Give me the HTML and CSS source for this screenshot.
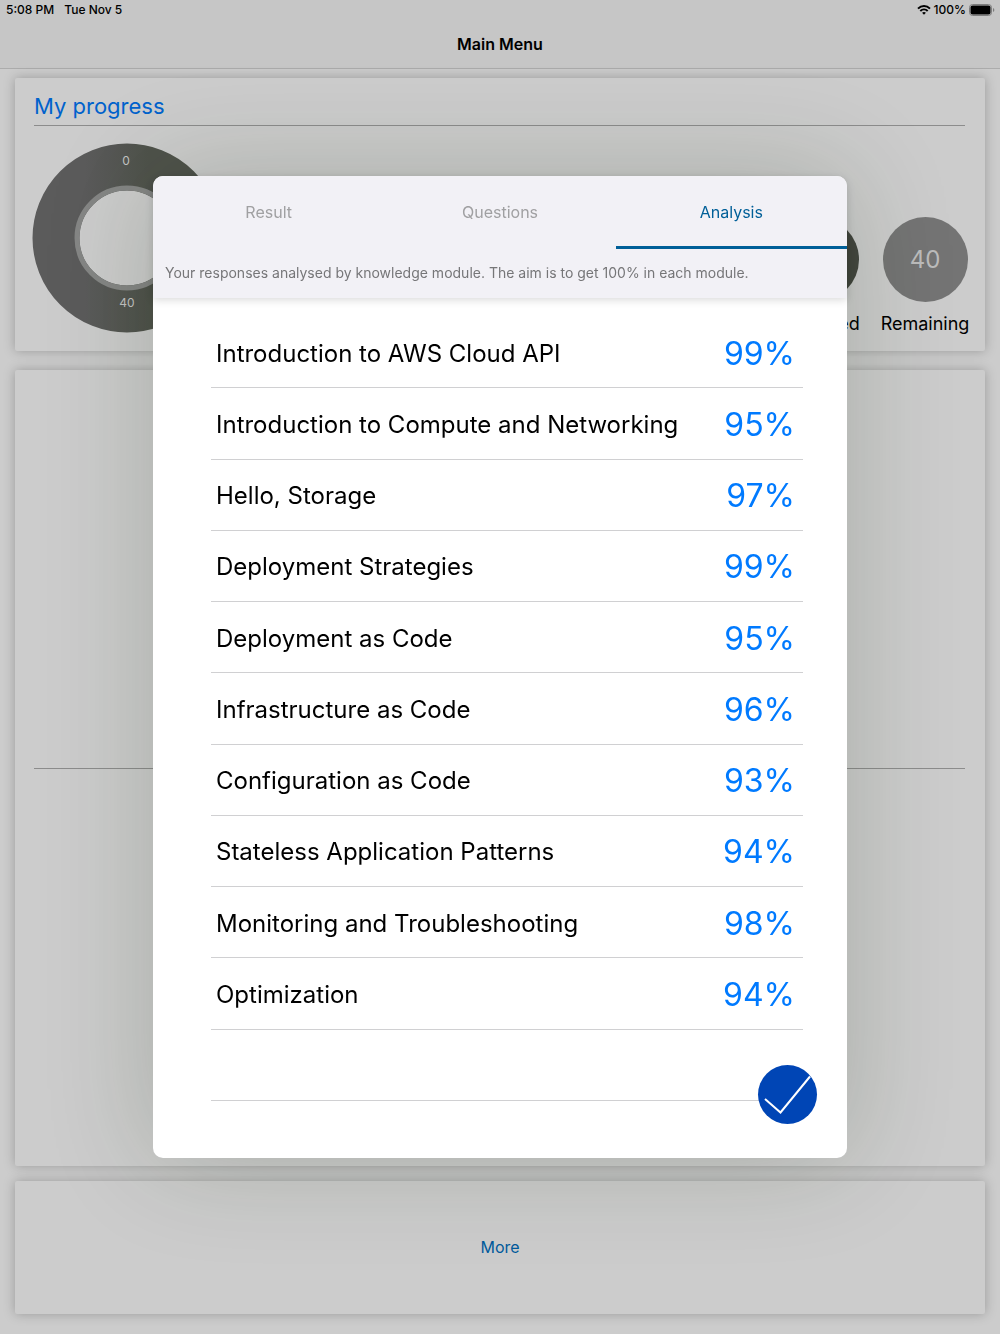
FILE: index.html
```html
<!DOCTYPE html>
<html lang="en">
<head>
  <meta charset="UTF-8" />
  <meta name="viewport" content="width=device-width, initial-scale=1.0"/>
  <title>Main Menu</title>
  <link rel="stylesheet" href="styles.css">
</head>
<body>
  <!-- Top bar -->
  <header class="topbar">
    <div class="status">
      <span>5:08 PM</span>
      <span>Tue Nov 5</span>
      <span class="status-right">
        <svg width="14" height="10" viewBox="0 0 14 10" fill="none" stroke="#000" stroke-width="2">
          <path d="M1 3.6 C4.4 0.2 9.6 0.2 13 3.6" />
          <path d="M3.3 6 C5.4 4 8.6 4 10.7 6" />
          <path d="M5.1 7.7 C6.2 6.8 7.8 6.8 8.9 7.7 L7 9.8 Z" fill="#000" stroke="none" />
        </svg>
        <span>100%</span>
        <svg width="26" height="12" viewBox="0 0 26 12">
          <rect x="0.5" y="0.5" width="22" height="11" rx="3" fill="none" stroke="#7d7d7d" />
          <rect x="1.5" y="1.5" width="20" height="9" rx="2" fill="#000" />
          <path d="M24 4 C25.8 4.6 25.8 7.4 24 8 Z" fill="#7d7d7d" />
        </svg>
      </span>
    </div>
    <h1 class="page-title">Main Menu</h1>
  </header>

  <main class="cards">
    <!-- My progress -->
    <section class="card progress">
      <h2 class="card-title">My progress</h2>
      <div class="progress-row">
        <svg class="donut" width="190" height="190" viewBox="0 0 190 190">
          <defs>
            <linearGradient id="ring" x1="0" x2="1" y1="0" y2="0">
              <stop offset="0.2" stop-color="#5b5b5b" />
              <stop offset="0.65" stop-color="#4f524b" />
            </linearGradient>
          </defs>
          <circle cx="95" cy="95" r="71" fill="none" stroke="url(#ring)" stroke-width="47" />
          <circle cx="95" cy="95" r="50" fill="none" stroke="#858685" stroke-width="5" />
          <text x="94" y="22">0</text>
          <text x="95" y="164">40</text>
        </svg>
        <div class="stats">
          <div class="stat">
            <div class="stat-circle dark"></div>
            <div>Attempted</div>
          </div>
          <div class="stat">
            <div class="stat-circle">40</div>
            <div>Remaining</div>
          </div>
        </div>
      </div>
    </section>

    <section class="card middle">
      <hr />
    </section>

    <section class="card more">
      <a href="#">More</a>
    </section>
  </main>

  <!-- Result dialog -->
  <div class="overlay">
    <div class="modal" role="dialog" aria-label="Analysis">
      <div class="modal-head">
        <div class="tabs">
          <button class="tab">Result</button>
          <button class="tab">Questions</button>
          <button class="tab active">Analysis</button>
        </div>
        <p class="hint">Your responses analysed by knowledge module. The aim is to get 100% in each module.</p>
      </div>

      <table class="modules">
        <tr><td>Introduction to AWS Cloud API</td><td class="score">99%</td></tr>
        <tr><td>Introduction to Compute and Networking</td><td class="score">95%</td></tr>
        <tr><td>Hello, Storage</td><td class="score">97%</td></tr>
        <tr><td>Deployment Strategies</td><td class="score">99%</td></tr>
        <tr><td>Deployment as Code</td><td class="score">95%</td></tr>
        <tr><td>Infrastructure as Code</td><td class="score">96%</td></tr>
        <tr><td>Configuration as Code</td><td class="score">93%</td></tr>
        <tr><td>Stateless Application Patterns</td><td class="score">94%</td></tr>
        <tr><td>Monitoring and Troubleshooting</td><td class="score">98%</td></tr>
        <tr><td>Optimization</td><td class="score">94%</td></tr>
        <tr><td></td><td></td></tr>
      </table>

      <button class="done" aria-label="Done">
        <svg width="59" height="59" viewBox="0 0 59 59" fill="none" stroke="#fff" stroke-width="2">
          <path d="M7 34 L22.5 47.5 L52 11.5" />
        </svg>
      </button>
    </div>
  </div>
</body>
</html>
```
FILE: styles.css
```css
* {
  box-sizing: border-box;
}

body {
  margin: 0;
  min-height: 100vh;
  display: flex;
  flex-direction: column;
  background-color: #cccccc;
  color: #000;
  font-family: Inter, "Liberation Sans", sans-serif;
}

button {
  border: none;
  padding: 0;
  font-family: inherit;
  cursor: pointer;
}

a {
  color: #005a9c;
  text-decoration: none;
}

hr {
  width: 100%;
  margin: 0;
  border: none;
  border-top: 1px solid #8c8c8c;
}

/* Top bar */
.topbar {
  height: 69px;
  background-color: #c6c6c6;
  border-bottom: 1px solid #acacac;
}

.status {
  display: flex;
  gap: 10px;
  padding: 0 5px 0 6px;
  font-size: 12px;
  font-weight: 500;
  line-height: 20px;
}

.status-right {
  display: flex;
  align-items: center;
  gap: 3px;
  margin-left: auto;
}

.page-title {
  margin: 0;
  font-size: 16px;
  font-weight: 600;
  line-height: 48px;
  text-align: center;
}

/* Cards */
.cards {
  flex: 1;
  display: flex;
  flex-direction: column;
  padding: 9px 15px 20px;
}

.card {
  background-color: #cccccc;
  border-radius: 2px;
  box-shadow: 0 0 12px rgba(0, 0, 0, 0.25);
}

.progress {
  padding: 9px 15px 5px 17px;
  margin-bottom: 19px;
}

.card-title {
  margin: 0 5px 0 2px;
  border-bottom: 1px solid #8c8c8c;
  color: #0062cc;
  font-size: 22px;
  font-weight: 400;
  line-height: 38px;
}

.progress-row {
  display: flex;
  justify-content: space-between;
  align-items: flex-end;
  margin-top: 17px;
}

.donut {
  display: block;
  margin-bottom: 13px;
}

.donut text {
  fill: #c4c4c4;
  font-size: 12px;
  text-anchor: middle;
}

.stats {
  display: flex;
  gap: 19px;
}

.stat {
  width: 90px;
  font-size: 18px;
  line-height: 44px;
  text-align: center;
}

.stat-circle {
  width: 85px;
  height: 85px;
  margin: 0 auto;
  border-radius: 50%;
  background-color: #747474;
  color: #bcbcbc;
  font-size: 24px;
  line-height: 85px;
}

.stat-circle.dark {
  background-color: #43463f;
}

.middle {
  flex: 1;
  display: flex;
  align-items: center;
  padding: 0 20px 0 19px;
  margin-bottom: 15px;
}

.more {
  padding: 56px 20px;
  font-size: 16px;
  line-height: 21px;
  text-align: center;
}

/* Dialog */
.overlay {
  position: fixed;
  inset: 0;
  display: flex;
  align-items: center;
  justify-content: center;
}

.modal {
  position: relative;
  width: 70%;
  max-width: 694px;
  padding-bottom: 57px;
  border-radius: 10px;
  background-color: #fff;
  box-shadow: 0 0 110px rgba(25, 45, 15, 0.2);
}

.modal-head {
  border-radius: 10px 10px 0 0;
  background-color: #f2f1f6;
  box-shadow: 0 2px 8px rgba(0, 0, 0, 0.15);
}

.tabs {
  display: grid;
  grid-template-columns: repeat(3, 1fr);
}

.tab {
  height: 73px;
  padding-top: 2px;
  border-bottom: 3px solid transparent;
  background: none;
  color: #a0a0a2;
  font-size: 16px;
}

.tab.active {
  border-bottom-color: #005f98;
  color: #005f98;
}

.hint {
  margin: 0;
  padding: 12px 12px 13px;
  color: #767678;
  font-size: 14px;
  line-height: 24px;
}

.modules {
  width: calc(100% - 102px);
  height: 784px;
  margin: 19px 44px 0 58px;
  border-spacing: 0;
  font-size: 24px;
}

.modules td {
  height: 71px;
  padding: 2px 8px 0 5px;
  border-bottom: 1px solid #d0d0d2;
}

.modules .score {
  color: #007aff;
  font-size: 32px;
  text-align: right;
}

.done {
  position: absolute;
  right: 30px;
  bottom: 34px;
  width: 59px;
  height: 59px;
  border-radius: 50%;
  background-color: #0045b5;
}

.done svg {
  display: block;
}
```
